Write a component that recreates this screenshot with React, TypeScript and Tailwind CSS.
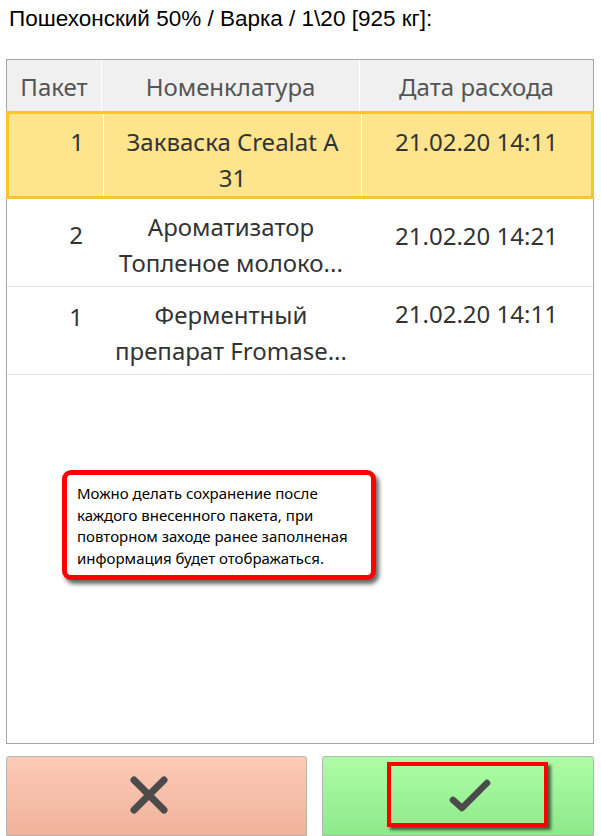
import React from 'react';

type Row = {
  pack: string;
  name: string[];
  date: string;
  selected?: boolean;
  packTop: string;
  dateTop: string;
};

const rows: Row[] = [
  { pack: '1', name: ['Закваска Crealat A', '31'], date: '21.02.20 14:11', selected: true, packTop: 'pt-[10px]', dateTop: 'pt-[10px]' },
  { pack: '2', name: ['Ароматизатор', 'Топленое молоко...'], date: '21.02.20 14:21', packTop: 'pt-[18px]', dateTop: 'pt-[19px]' },
  { pack: '1', name: ['Ферментный', 'препарат Fromase...'], date: '21.02.20 14:11', packTop: 'pt-[12px]', dateTop: 'pt-[9px]' },
];

function CrossIcon() {
  return (
    <svg width="40" height="40" viewBox="0 0 40 40" fill="none">
      <path d="M5 5 L35 35 M35 5 L5 35" stroke="#4b4b4b" strokeWidth="7" strokeLinecap="round" />
    </svg>
  );
}

function CheckIcon() {
  return (
    <svg width="44" height="36" viewBox="0 0 44 36" fill="none">
      <path d="M5 22 L14 30 L39 5" stroke="#4b4b4b" strokeWidth="6.5" strokeLinecap="round" strokeLinejoin="round" />
    </svg>
  );
}

export default function App() {
  return (
    <div className="w-[601px] h-[836px] overflow-hidden bg-white flex flex-col font-['Noto_Sans',sans-serif]">
      <div className="pl-[9px] pt-[6px] h-[60px] text-[22.5px] leading-[26px] text-black font-['Liberation_Sans',Arial,sans-serif]">
        Пошехонский 50% / Варка / 1\20 [925 кг]:
      </div>

      <div className="relative mx-[6px] w-[588px] h-[692px] border border-[#a6a6a6] flex flex-col">
        <div className="grid grid-cols-[95px_258px_1fr] h-[51px] bg-[#f0f0f0] text-[#555] text-[24px]">
          <div className="flex items-center justify-center border-r border-white pt-[3px]">Пакет</div>
          <div className="flex items-center justify-center border-r border-white pt-[3px]">Номенклатура</div>
          <div className="flex items-center justify-center pt-[3px]">Дата расхода</div>
        </div>

        {rows.map((r, i) => (
          <div
            key={i}
            className={
              r.selected
                ? 'grid grid-cols-[95px_258px_1fr] h-[88px] bg-[#fde48d] border-[3px] border-[#f8c62a] -mx-px text-[#333] text-[24px]'
                : 'grid grid-cols-[95px_258px_1fr] h-[88px] border-b border-[#e3e3e3] text-[#333] text-[24px]'
            }
          >
            <div className={`text-right pr-[19px] leading-[36px] ${r.packTop} ${r.selected ? 'border-r border-white' : ''}`}>
              {r.pack}
            </div>
            <div className={`text-center leading-[36px] pt-[10px] ${r.selected ? 'border-r border-white' : ''}`}>
              {r.name.map((l, j) => (
                <div key={j} className="whitespace-nowrap">{l}</div>
              ))}
            </div>
            <div className={`text-center leading-[36px] ${r.dateTop}`}>{r.date}</div>
          </div>
        ))}

        <div className="absolute left-[55px] top-[410px] w-[314px] h-[110px] rounded-[9px] border-[5px] border-[#ff0000] bg-white shadow-[3px_4px_4px_rgba(0,0,0,0.6)] pl-[10px] pt-[8px] text-[15px] leading-[21.5px] text-black whitespace-nowrap">
          Можно делать сохранение после
          <br />
          каждого внесенного пакета, при
          <br />
          повторном заходе ранее заполненая
          <br />
          информация будет отображаться.
        </div>
      </div>

      <div className="flex gap-[15px] mt-[12px] ml-[6px] mr-[7px]">
        <div className="w-[301px] h-[80px] shrink-0 rounded-t-[3px] border border-[#b4b4b4] bg-gradient-to-b from-[#fdcbb6] to-[#efb29b] flex items-start justify-center pt-[18px] pr-[16px]">
          <CrossIcon />
        </div>
        <div className="relative flex-1 h-[80px] rounded-t-[3px] border border-[#b4b4b4] bg-gradient-to-b from-[#adfda5] to-[#8ee98a]">
          <div className="absolute left-[64px] top-[5px] w-[161px] h-[65px] border-[4px] border-[#ff0000] shadow-[3px_3px_3px_rgba(0,0,0,0.6)] flex items-center justify-center pt-[2px] pl-[4px]">
            <CheckIcon />
          </div>
        </div>
      </div>
    </div>
  );
}
